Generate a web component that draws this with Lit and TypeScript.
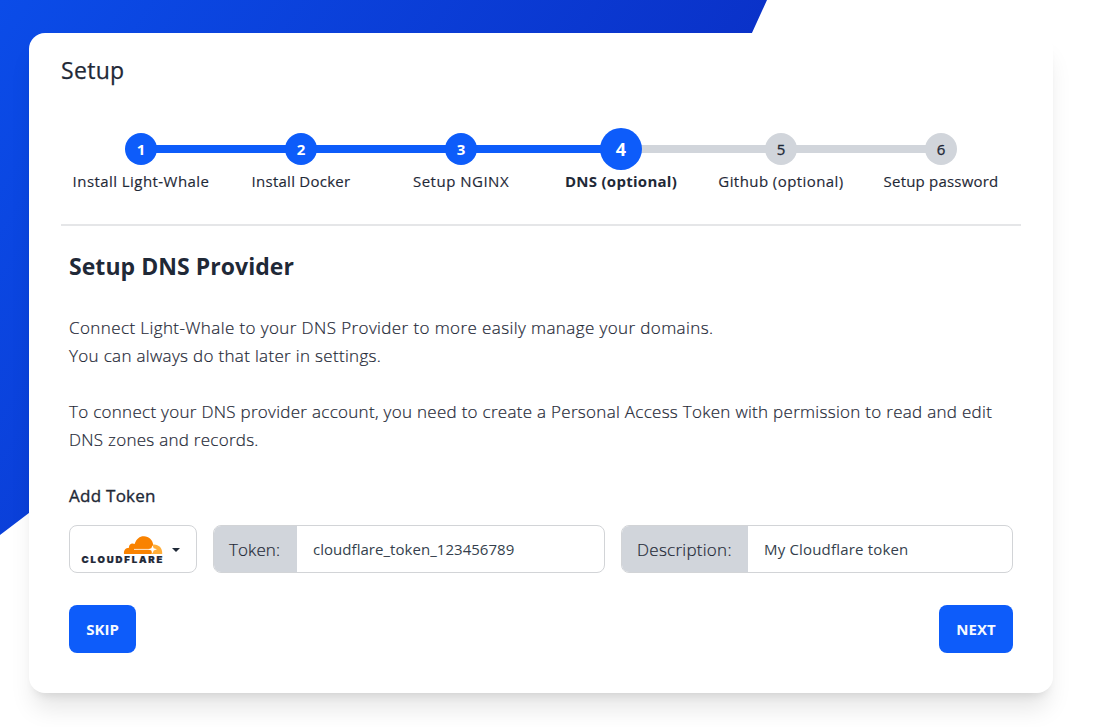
import { LitElement, html, css } from "lit";
import { customElement } from "lit/decorators.js";
import { classMap } from "lit/directives/class-map.js";

const STEPS = [
  { label: "Install Light-Whale", cls: "l1" },
  { label: "Install Docker", cls: "l2" },
  { label: "Setup NGINX", cls: "l3" },
  { label: "DNS (optional)", cls: "l4" },
  { label: "Github (optional)", cls: "l5" },
  { label: "Setup password", cls: "l6" },
];
const CURRENT = 3;

@customElement("app-root")
export class AppRoot extends LitElement {
  static styles = css`
    :host {
      display: flow-root;
      position: relative;
      height: 727px;
      overflow: hidden;
      background: #fff;
      color: #1f2937;
      font-family: "Open Sans", "Noto Sans", sans-serif;
      box-sizing: border-box;
    }
    * { box-sizing: border-box; margin: 0; }
    .backdrop { position: absolute; inset: 0; width: 100%; height: 100%; }
    .card {
      position: relative;
      width: 1024px;
      height: 660px;
      margin: 33px 0 0 29px;
      padding: 21px 32px 0;
      border-radius: 16px;
      background: #fff;
      box-shadow: 0 20px 25px -5px rgb(0 0 0 / 0.1), 0 8px 10px -6px rgb(0 0 0 / 0.1);
    }
    .title { font-size: 23px; line-height: 32px; font-weight: 400; letter-spacing: 0.3px; -webkit-text-stroke: 0.25px; }
    .steps {
      display: grid;
      grid-template-columns: repeat(6, 160px);
      height: 138px;
      padding-top: 41px;
    }
    .step {
      display: grid;
      grid-template-rows: 44px 20px;
      justify-items: center;
      align-items: center;
    }
    .dot, .bar { grid-row: 1; grid-column: 1; }
    .bar { width: 100%; height: 8px; background: #d1d5db; transform: translateX(-50%); }
    .bar.done { background: #0d5cfa; }
    .dot {
      position: relative;
      z-index: 1;
      display: grid;
      place-items: center;
      width: 32px;
      height: 32px;
      border-radius: 50%;
      background: #d1d5db;
      font-size: 15px;
      font-weight: 400;
      -webkit-text-stroke: 0.3px;
    }
    .dot.done { background: #0d5cfa; color: #fff; font-weight: 700; -webkit-text-stroke: 0; }
    .dot.current { width: 42px; height: 42px; font-size: 18px; font-weight: 700; }
    .label {
      grid-row: 2;
      grid-column: 1;
      font-size: 15px;
      line-height: 20px;
      white-space: nowrap;
      -webkit-text-stroke: 0.15px;
    }
    .l1 { letter-spacing: 0.44px; }
    .l2 { letter-spacing: 0.26px; }
    .l3 { letter-spacing: 0.5px; }
    .l4 { letter-spacing: 0.28px; font-weight: 700; -webkit-text-stroke: 0; }
    .l5 { letter-spacing: 0.43px; }
    .l6 { letter-spacing: 0.2px; }
    .rule { height: 2px; background: #e5e6e8; }
    .body { padding: 24px 8px 0; }
    .heading { font-size: 23px; line-height: 32px; font-weight: 700; letter-spacing: 0.05px; white-space: nowrap; }
    .text { font-size: 17px; line-height: 28px; font-weight: 300; white-space: nowrap; -webkit-text-stroke: 0.2px; }
    .p1 { letter-spacing: 0.4px; }
    .p2 { letter-spacing: 0.32px; }
    .p3 { letter-spacing: 0.29px; }
    .p4 { letter-spacing: 0.27px; }
    .intro { margin-top: 32px; }
    .hint { margin-top: 28px; }
    .sub { margin-top: 28px; font-size: 17px; line-height: 28px; font-weight: 400; letter-spacing: 0.26px; -webkit-text-stroke: 0.35px; }
    .form {
      display: grid;
      grid-template-columns: 128px 392px 392px;
      gap: 16px;
      height: 48px;
      margin-top: 15px;
    }
    .box { display: flex; align-items: center; border: 1px solid #d2d4d7; border-radius: 8px; overflow: hidden; background: #fff; }
    .logo { display: block; margin: 2px 0 0 11px; }
    .brand { font: 900 9.6px Inter, sans-serif; fill: #1f2937; stroke: #1f2937; stroke-width: 0.2px; }
    .caret { margin: 1px 0 0 6.5px; }
    .tag {
      display: flex;
      align-items: center;
      height: 48px;
      padding-left: 15px;
      background: #d1d5db;
      font-size: 17px;
      font-weight: 300;
      white-space: nowrap;
      -webkit-text-stroke: 0.2px;
    }
    .w1 { width: 83px; letter-spacing: 0.1px; }
    .w2 { width: 126px; letter-spacing: 0.27px; }
    .value { padding-left: 16px; font-size: 15px; font-weight: 400; white-space: nowrap; color: #353f4d; letter-spacing: 0.04px; }
    .v2 { letter-spacing: 0.18px; }
    .actions { display: flex; justify-content: space-between; margin-top: 32px; }
    .btn {
      height: 48px;
      padding: 0;
      border: 0;
      border-radius: 8px;
      background: #0d5cfa;
      color: #f5f9ff;
      font: 700 15px "Open Sans", sans-serif;
    }
    .skip { width: 67px; }
    .next { width: 74px; letter-spacing: 0.1px; }
  `;

  render() {
    return html`
      <svg class="backdrop" viewBox="0 0 1099 727" preserveAspectRatio="none">
        <defs>
          <linearGradient id="g" gradientUnits="userSpaceOnUse" x1="0" y1="0" x2="730" y2="480">
            <stop offset="0" stop-color="#0b4ce8" />
            <stop offset="1" stop-color="#0a29be" />
          </linearGradient>
        </defs>
        <path d="M0 0H767L630 301L300 307L0 535Z" fill="url(#g)" />
      </svg>
      <main class="card">
        <h1 class="title">Setup</h1>
        <div class="steps">
          ${STEPS.map(
            (s, i) => html`<div class="step">
              ${i ? html`<div class=${classMap({ bar: true, done: i <= CURRENT })}></div>` : ""}
              <div class=${classMap({ dot: true, done: i <= CURRENT, current: i === CURRENT })}>${i + 1}</div>
              <div class="label ${s.cls}">${s.label}</div>
            </div>`
          )}
        </div>
        <div class="rule"></div>
        <section class="body">
          <h2 class="heading">Setup DNS Provider</h2>
          <p class="text intro">
            <span class="p1">Connect Light-Whale to your DNS Provider to more easily manage your domains.</span><br />
            <span class="p2">You can always do that later in settings.</span>
          </p>
          <p class="text hint">
            <span class="p3">To connect your DNS provider account, you need to create a Personal Access Token with permission to read and edit</span><br />
            <span class="p4">DNS zones and records.</span>
          </p>
          <h3 class="sub">Add Token</h3>
          <div class="form">
            <div class="box">
              <svg class="logo" width="84" height="32" viewBox="81 534 84 32">
                <path fill="#f98200" d="M124 554c-.4-3.700 1.500-6.200 5-6.300-.4-3.300 2.700-5.200 5.600-3.700C136.500 538.500 140 536 144 536.200c5 .2 8.600 3.700 9.200 8.300l-1.500 9.500Z" />
                <path fill="#ffad38" d="M151 554l2.300-9.500c5.200-.4 8.800 3.300 8.900 8.200v1.300Z" />
                <path fill="none" stroke="#fff" stroke-width=".8" d="M134 549.400h17" />
                <path fill="#fff" d="M152.500 545.300l1.200 3 3.300 1-3.300 1.300-1.200 3-1.200-3-3-1.300 3-1Z" />
                <text class="brand" x="81.500" y="563" textLength="81">CLOUDFLARE</text>
              </svg>
              <svg class="caret" width="8" height="4" viewBox="0 0 8 4"><path d="M0 0H8L4 4Z" fill="#1f2937" /></svg>
            </div>
            <div class="box"><span class="tag w1">Token:</span><span class="value v1">cloudflare_token_123456789</span></div>
            <div class="box"><span class="tag w2">Description:</span><span class="value v2">My Cloudflare token</span></div>
          </div>
          <div class="actions">
            <button class="btn skip">SKIP</button>
            <button class="btn next">NEXT</button>
          </div>
        </section>
      </main>
    `;
  }
}
